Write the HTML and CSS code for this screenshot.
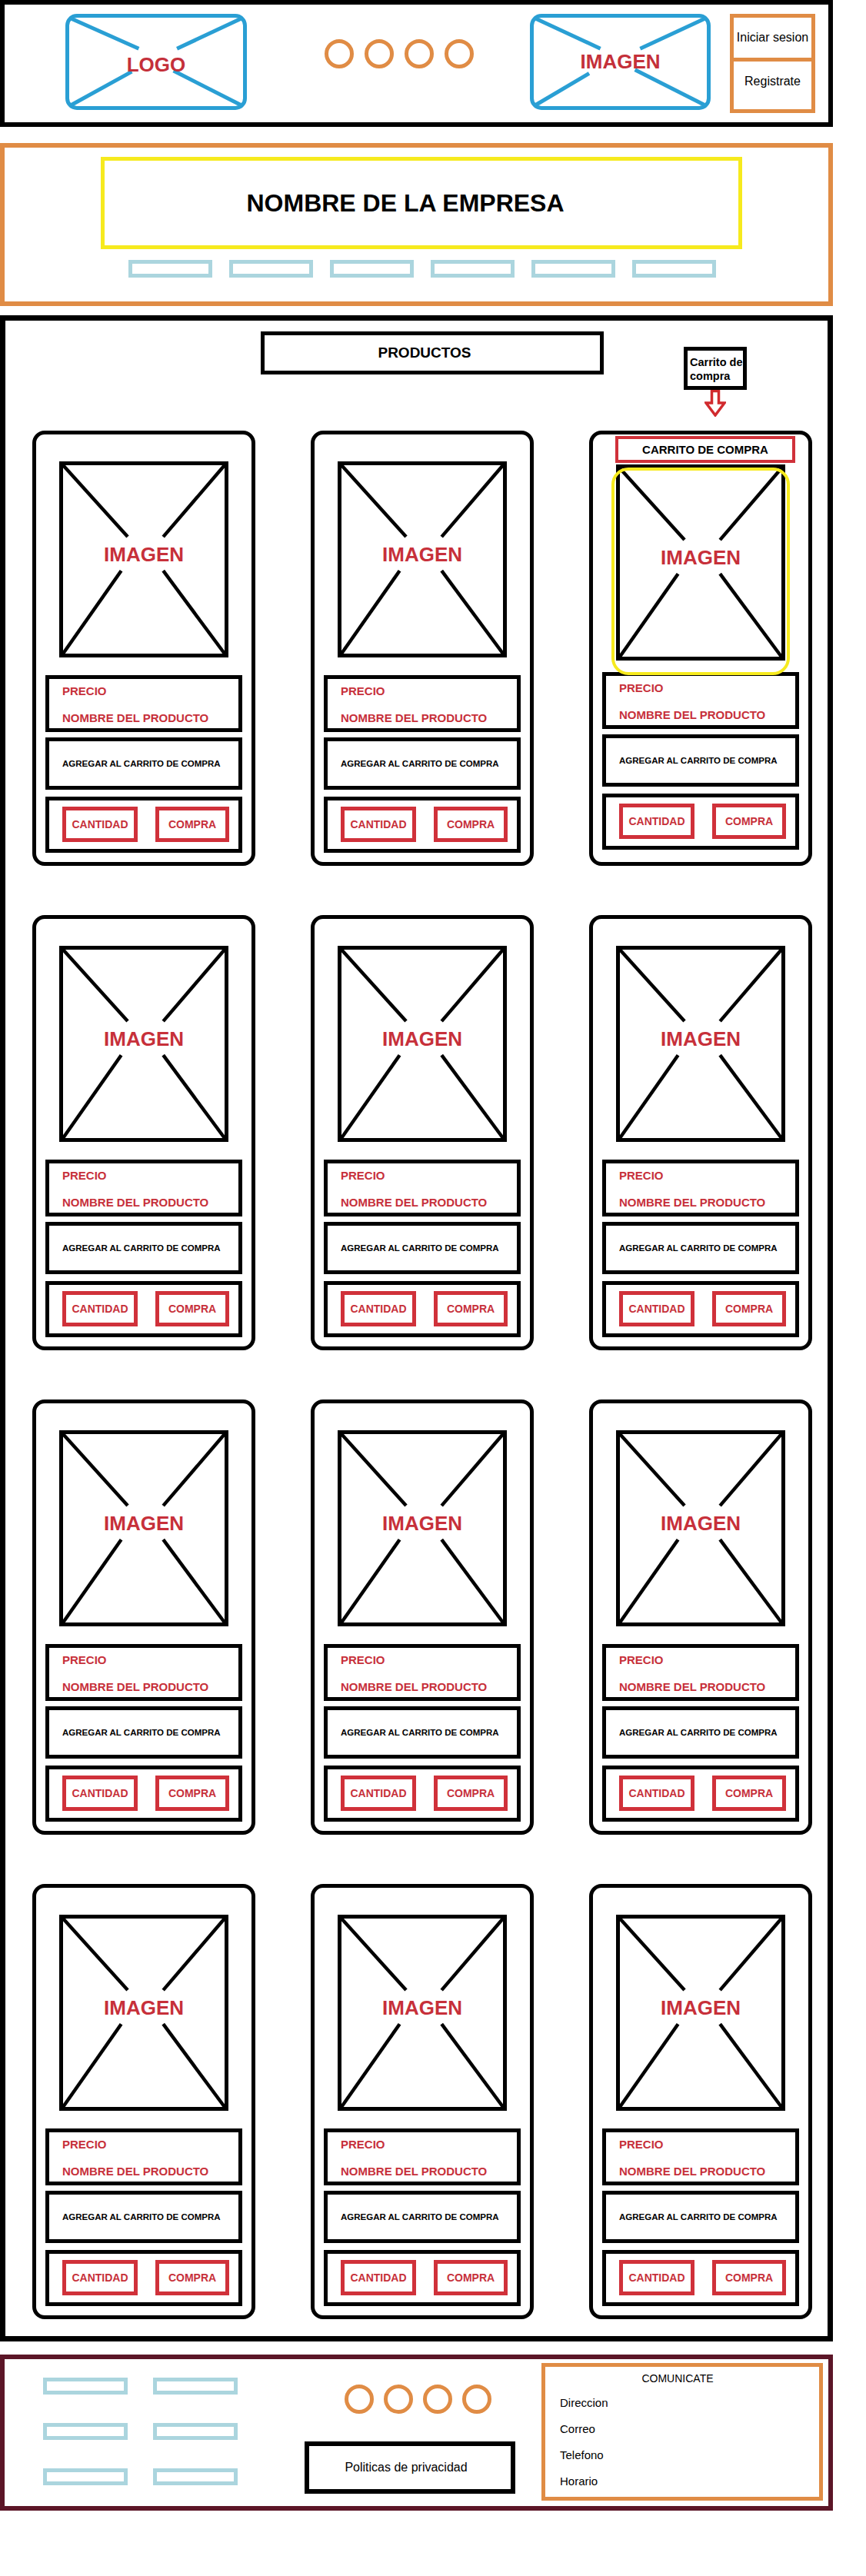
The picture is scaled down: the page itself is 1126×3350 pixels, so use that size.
FILE: index.html
```html
<!DOCTYPE html>
<html lang="es">
<head>
<meta charset="utf-8">
<title>Wireframe tienda</title>
<link rel="stylesheet" href="styles.css">
</head>
<body>
<div class="page">

  <header class="topbar">
    <div class="ph ph-logo">
      <svg class="xmark" viewBox="0 0 100 100" preserveAspectRatio="none"><line x1="0" y1="0" x2="40" y2="35"/><line x1="100" y1="0" x2="62" y2="35"/><line x1="0" y1="100" x2="36" y2="61"/><line x1="100" y1="100" x2="60" y2="60"/></svg>
      <span class="ph-label">LOGO</span>
    </div>
    <div class="dots dots-top"><span class="dot"></span><span class="dot"></span><span class="dot"></span><span class="dot"></span></div>
    <div class="ph ph-image">
      <svg class="xmark" viewBox="0 0 100 100" preserveAspectRatio="none"><line x1="0" y1="0" x2="38.5" y2="35"/><line x1="100" y1="0" x2="61.5" y2="35"/><line x1="0" y1="100" x2="32" y2="63"/><line x1="100" y1="100" x2="58.5" y2="59"/></svg>
      <span class="ph-label">IMAGEN</span>
    </div>
    <div class="auth">
      <div class="auth-item">Iniciar sesion</div>
      <div class="auth-item auth-item-2">Registrate</div>
    </div>
  </header>

  <section class="brand">
    <div class="brand-title"><h1>NOMBRE DE LA EMPRESA</h1></div>
    <nav class="brand-nav"><span class="navbox"></span><span class="navbox"></span><span class="navbox"></span><span class="navbox"></span><span class="navbox"></span><span class="navbox"></span></nav>
  </section>

  <main class="products">
    <div class="products-head">
      <div class="products-title">PRODUCTOS</div>
      <div class="cart-note">
        <div class="cart-note-box">Carrito de<br>compra</div>
        <svg class="cart-arrow" viewBox="0 0 28 35"><polygon points="9.5,1.5 18.5,1.5 18.5,17 26,17 14,33 2,17 9.5,17"/></svg>
      </div>
    </div>

    <div class="grid">
      <article class="card">
        <div class="card-img"><svg class="xmark" viewBox="0 0 100 100" preserveAspectRatio="none"><line x1="0" y1="0" x2="40" y2="38"/><line x1="100" y1="0" x2="62" y2="38"/><line x1="0" y1="100" x2="36" y2="56"/><line x1="100" y1="100" x2="62" y2="56"/></svg><span class="img-label">IMAGEN</span></div>
        <div class="card-info"><span>PRECIO</span><span>NOMBRE DEL PRODUCTO</span></div>
        <div class="card-add">AGREGAR AL CARRITO DE COMPRA</div>
        <div class="card-actions"><span class="btn btn-qty">CANTIDAD</span><span class="btn btn-buy">COMPRA</span></div>
      </article>
      <article class="card">
        <div class="card-img"><svg class="xmark" viewBox="0 0 100 100" preserveAspectRatio="none"><line x1="0" y1="0" x2="40" y2="38"/><line x1="100" y1="0" x2="62" y2="38"/><line x1="0" y1="100" x2="36" y2="56"/><line x1="100" y1="100" x2="62" y2="56"/></svg><span class="img-label">IMAGEN</span></div>
        <div class="card-info"><span>PRECIO</span><span>NOMBRE DEL PRODUCTO</span></div>
        <div class="card-add">AGREGAR AL CARRITO DE COMPRA</div>
        <div class="card-actions"><span class="btn btn-qty">CANTIDAD</span><span class="btn btn-buy">COMPRA</span></div>
      </article>
      <article class="card card-featured">
        <div class="cart-bar">CARRITO DE COMPRA</div>
        <div class="card-img"><svg class="xmark" viewBox="0 0 100 100" preserveAspectRatio="none"><line x1="0" y1="0" x2="40" y2="38"/><line x1="100" y1="0" x2="62" y2="38"/><line x1="0" y1="100" x2="36" y2="56"/><line x1="100" y1="100" x2="62" y2="56"/></svg><span class="img-label">IMAGEN</span><span class="highlight"></span></div>
        <div class="card-info"><span>PRECIO</span><span>NOMBRE DEL PRODUCTO</span></div>
        <div class="card-add">AGREGAR AL CARRITO DE COMPRA</div>
        <div class="card-actions"><span class="btn btn-qty">CANTIDAD</span><span class="btn btn-buy">COMPRA</span></div>
      </article>

      <article class="card">
        <div class="card-img"><svg class="xmark" viewBox="0 0 100 100" preserveAspectRatio="none"><line x1="0" y1="0" x2="40" y2="38"/><line x1="100" y1="0" x2="62" y2="38"/><line x1="0" y1="100" x2="36" y2="56"/><line x1="100" y1="100" x2="62" y2="56"/></svg><span class="img-label">IMAGEN</span></div>
        <div class="card-info"><span>PRECIO</span><span>NOMBRE DEL PRODUCTO</span></div>
        <div class="card-add">AGREGAR AL CARRITO DE COMPRA</div>
        <div class="card-actions"><span class="btn btn-qty">CANTIDAD</span><span class="btn btn-buy">COMPRA</span></div>
      </article>
      <article class="card">
        <div class="card-img"><svg class="xmark" viewBox="0 0 100 100" preserveAspectRatio="none"><line x1="0" y1="0" x2="40" y2="38"/><line x1="100" y1="0" x2="62" y2="38"/><line x1="0" y1="100" x2="36" y2="56"/><line x1="100" y1="100" x2="62" y2="56"/></svg><span class="img-label">IMAGEN</span></div>
        <div class="card-info"><span>PRECIO</span><span>NOMBRE DEL PRODUCTO</span></div>
        <div class="card-add">AGREGAR AL CARRITO DE COMPRA</div>
        <div class="card-actions"><span class="btn btn-qty">CANTIDAD</span><span class="btn btn-buy">COMPRA</span></div>
      </article>
      <article class="card">
        <div class="card-img"><svg class="xmark" viewBox="0 0 100 100" preserveAspectRatio="none"><line x1="0" y1="0" x2="40" y2="38"/><line x1="100" y1="0" x2="62" y2="38"/><line x1="0" y1="100" x2="36" y2="56"/><line x1="100" y1="100" x2="62" y2="56"/></svg><span class="img-label">IMAGEN</span></div>
        <div class="card-info"><span>PRECIO</span><span>NOMBRE DEL PRODUCTO</span></div>
        <div class="card-add">AGREGAR AL CARRITO DE COMPRA</div>
        <div class="card-actions"><span class="btn btn-qty">CANTIDAD</span><span class="btn btn-buy">COMPRA</span></div>
      </article>

      <article class="card">
        <div class="card-img"><svg class="xmark" viewBox="0 0 100 100" preserveAspectRatio="none"><line x1="0" y1="0" x2="40" y2="38"/><line x1="100" y1="0" x2="62" y2="38"/><line x1="0" y1="100" x2="36" y2="56"/><line x1="100" y1="100" x2="62" y2="56"/></svg><span class="img-label">IMAGEN</span></div>
        <div class="card-info"><span>PRECIO</span><span>NOMBRE DEL PRODUCTO</span></div>
        <div class="card-add">AGREGAR AL CARRITO DE COMPRA</div>
        <div class="card-actions"><span class="btn btn-qty">CANTIDAD</span><span class="btn btn-buy">COMPRA</span></div>
      </article>
      <article class="card">
        <div class="card-img"><svg class="xmark" viewBox="0 0 100 100" preserveAspectRatio="none"><line x1="0" y1="0" x2="40" y2="38"/><line x1="100" y1="0" x2="62" y2="38"/><line x1="0" y1="100" x2="36" y2="56"/><line x1="100" y1="100" x2="62" y2="56"/></svg><span class="img-label">IMAGEN</span></div>
        <div class="card-info"><span>PRECIO</span><span>NOMBRE DEL PRODUCTO</span></div>
        <div class="card-add">AGREGAR AL CARRITO DE COMPRA</div>
        <div class="card-actions"><span class="btn btn-qty">CANTIDAD</span><span class="btn btn-buy">COMPRA</span></div>
      </article>
      <article class="card">
        <div class="card-img"><svg class="xmark" viewBox="0 0 100 100" preserveAspectRatio="none"><line x1="0" y1="0" x2="40" y2="38"/><line x1="100" y1="0" x2="62" y2="38"/><line x1="0" y1="100" x2="36" y2="56"/><line x1="100" y1="100" x2="62" y2="56"/></svg><span class="img-label">IMAGEN</span></div>
        <div class="card-info"><span>PRECIO</span><span>NOMBRE DEL PRODUCTO</span></div>
        <div class="card-add">AGREGAR AL CARRITO DE COMPRA</div>
        <div class="card-actions"><span class="btn btn-qty">CANTIDAD</span><span class="btn btn-buy">COMPRA</span></div>
      </article>

      <article class="card">
        <div class="card-img"><svg class="xmark" viewBox="0 0 100 100" preserveAspectRatio="none"><line x1="0" y1="0" x2="40" y2="38"/><line x1="100" y1="0" x2="62" y2="38"/><line x1="0" y1="100" x2="36" y2="56"/><line x1="100" y1="100" x2="62" y2="56"/></svg><span class="img-label">IMAGEN</span></div>
        <div class="card-info"><span>PRECIO</span><span>NOMBRE DEL PRODUCTO</span></div>
        <div class="card-add">AGREGAR AL CARRITO DE COMPRA</div>
        <div class="card-actions"><span class="btn btn-qty">CANTIDAD</span><span class="btn btn-buy">COMPRA</span></div>
      </article>
      <article class="card">
        <div class="card-img"><svg class="xmark" viewBox="0 0 100 100" preserveAspectRatio="none"><line x1="0" y1="0" x2="40" y2="38"/><line x1="100" y1="0" x2="62" y2="38"/><line x1="0" y1="100" x2="36" y2="56"/><line x1="100" y1="100" x2="62" y2="56"/></svg><span class="img-label">IMAGEN</span></div>
        <div class="card-info"><span>PRECIO</span><span>NOMBRE DEL PRODUCTO</span></div>
        <div class="card-add">AGREGAR AL CARRITO DE COMPRA</div>
        <div class="card-actions"><span class="btn btn-qty">CANTIDAD</span><span class="btn btn-buy">COMPRA</span></div>
      </article>
      <article class="card">
        <div class="card-img"><svg class="xmark" viewBox="0 0 100 100" preserveAspectRatio="none"><line x1="0" y1="0" x2="40" y2="38"/><line x1="100" y1="0" x2="62" y2="38"/><line x1="0" y1="100" x2="36" y2="56"/><line x1="100" y1="100" x2="62" y2="56"/></svg><span class="img-label">IMAGEN</span></div>
        <div class="card-info"><span>PRECIO</span><span>NOMBRE DEL PRODUCTO</span></div>
        <div class="card-add">AGREGAR AL CARRITO DE COMPRA</div>
        <div class="card-actions"><span class="btn btn-qty">CANTIDAD</span><span class="btn btn-buy">COMPRA</span></div>
      </article>
    </div>
  </main>

  <footer class="footer">
    <div class="footer-links">
      <span class="navbox"></span><span class="navbox"></span>
      <span class="navbox"></span><span class="navbox"></span>
      <span class="navbox"></span><span class="navbox"></span>
    </div>
    <div class="footer-mid">
      <div class="dots dots-foot"><span class="dot"></span><span class="dot"></span><span class="dot"></span><span class="dot"></span></div>
      <div class="privacy">Politicas de privacidad</div>
    </div>
    <div class="contact">
      <div class="contact-title">COMUNICATE</div>
      <ul class="contact-list">
        <li>Direccion</li>
        <li>Correo</li>
        <li>Telefono</li>
        <li>Horario</li>
      </ul>
    </div>
  </footer>

</div>
</body>
</html>
```

FILE: styles.css
```css
html, body {
  margin: 0;
  padding: 0;
  background: #ffffff;
}

body {
  font-family: "Liberation Sans", Arial, sans-serif;
  color: #000;
}

.page {
  width: 1083px;
  min-height: 3350px;
}

/* ---------- top bar ---------- */
.topbar {
  box-sizing: border-box;
  height: 165px;
  border: 6px solid #000;
  display: flex;
  align-items: flex-start;
}

.ph {
  position: relative;
  box-sizing: border-box;
  border: 5px solid #2a9fd4;
  border-radius: 15px;
  height: 125px;
  margin-top: 12px;
  display: flex;
  align-items: center;
  justify-content: center;
}

.ph-logo {
  width: 236px;
  margin-left: 79px;
}

.ph-image {
  width: 235px;
  margin-left: 73px;
}

.xmark {
  position: absolute;
  left: 0;
  top: 0;
  width: 100%;
  height: 100%;
  overflow: visible;
}

.xmark line {
  stroke: #000;
  stroke-width: 4.5;
  vector-effect: non-scaling-stroke;
}

.ph .xmark line {
  stroke: #2a9fd4;
  stroke-width: 5;
}

.ph-label {
  position: relative;
  font-weight: bold;
  font-size: 26px;
  color: #c4303a;
}

.ph-logo .ph-label {
  margin-top: 8px;
}

.dots {
  display: flex;
  gap: 14px;
}

.dots-top {
  margin-left: 101px;
  margin-top: 45px;
}

.dot {
  box-sizing: border-box;
  width: 38px;
  height: 38px;
  border: 5px solid #e08c45;
  border-radius: 50%;
}

.auth {
  box-sizing: border-box;
  width: 111px;
  height: 129px;
  margin-left: 25px;
  margin-top: 12px;
  border: 5px solid #e08c45;
  display: flex;
  flex-direction: column;
}

.auth-item {
  flex: 1;
  display: flex;
  align-items: center;
  justify-content: center;
  font-size: 16px;
}

.auth-item-2 {
  border-top: 5px solid #e08c45;
  padding-bottom: 10px;
}

/* ---------- brand ---------- */
.brand {
  box-sizing: border-box;
  height: 212px;
  margin-top: 21px;
  border: 6px solid #e08c45;
  padding: 12px 0 0 125px;
}

.brand-title {
  box-sizing: border-box;
  width: 834px;
  height: 120px;
  border: 5px solid #f6ea1e;
  display: flex;
  align-items: center;
  justify-content: center;
  padding-right: 42px;
}

.brand-title h1 {
  margin: 0;
  font-size: 32px;
  font-weight: bold;
}

.brand-nav {
  display: flex;
  gap: 22px;
  margin: 14px 0 0 36px;
}

.navbox {
  box-sizing: border-box;
  width: 109px;
  height: 23px;
  border: 5px solid #abd5de;
}

/* ---------- products ---------- */
.products {
  display: block;
  box-sizing: border-box;
  margin-top: 12px;
  border: 7px solid #000;
  padding: 0 20px 22px 35px;
}

.products-head {
  display: flex;
  align-items: flex-start;
  padding-left: 297px;
}

.products-title {
  box-sizing: border-box;
  width: 446px;
  height: 56px;
  margin-top: 14px;
  border: 5px solid #000;
  display: flex;
  align-items: center;
  justify-content: center;
  padding-right: 20px;
  font-weight: bold;
  font-size: 19px;
}

.cart-note {
  margin-left: 104px;
  margin-top: 34px;
  display: flex;
  flex-direction: column;
  align-items: center;
}

.cart-note-box {
  box-sizing: border-box;
  width: 82px;
  height: 56px;
  border: 5px solid #000;
  padding: 6px 0 0 3px;
  font-weight: bold;
  font-size: 14.5px;
  line-height: 18px;
  white-space: nowrap;
}

.cart-arrow {
  display: block;
  width: 28px;
  height: 35px;
}

.cart-arrow polygon {
  fill: #fff;
  stroke: #d12a2e;
  stroke-width: 3.5;
  stroke-linejoin: miter;
}

.grid {
  display: grid;
  grid-template-columns: repeat(3, 290px);
  column-gap: 72px;
  row-gap: 64px;
  margin-top: 18px;
}

.card {
  box-sizing: border-box;
  height: 566px;
  border: 5px solid #000;
  border-radius: 16px;
  padding: 35px 12px 12px;
  display: flex;
  flex-direction: column;
}

.card-img {
  position: relative;
  box-sizing: border-box;
  height: 255px;
  margin: 0 18px 23px;
  border: 5px solid #000;
  display: flex;
  align-items: center;
  justify-content: center;
}

.img-label {
  position: relative;
  font-weight: bold;
  font-size: 26px;
  color: #c7303a;
  margin-top: -12px;
}

.card-info {
  box-sizing: border-box;
  height: 74px;
  border: 5px solid #000;
  padding: 7px 0 0 17px;
  display: flex;
  flex-direction: column;
  gap: 17px;
  font-weight: bold;
  font-size: 15px;
  line-height: 18px;
  color: #c7303a;
}

.card-add {
  box-sizing: border-box;
  height: 68px;
  margin-top: 7px;
  border: 5px solid #000;
  padding-left: 17px;
  display: flex;
  align-items: center;
  font-weight: bold;
  font-size: 11.5px;
}

.card-actions {
  box-sizing: border-box;
  height: 73px;
  margin-top: 9px;
  border: 5px solid #000;
  padding: 0 0 2px 17px;
  display: flex;
  align-items: center;
  gap: 23px;
}

.btn {
  box-sizing: border-box;
  height: 46px;
  border: 5px solid #d0313a;
  display: flex;
  align-items: center;
  justify-content: center;
  font-weight: bold;
  font-size: 14px;
  color: #c7303a;
}

.btn-qty {
  width: 98px;
}

.btn-buy {
  width: 96px;
}

.card-featured {
  padding-top: 2px;
}

.card-featured .card-img {
  margin-bottom: 15px;
}

.cart-bar {
  box-sizing: border-box;
  height: 35px;
  margin: 0 5px 2px 17px;
  border: 4px solid #d0313a;
  display: flex;
  align-items: center;
  justify-content: center;
  font-weight: bold;
  font-size: 15px;
}

.highlight {
  position: absolute;
  left: -11px;
  right: -11px;
  top: -1px;
  bottom: -24px;
  border: 4px solid #f6ea1e;
  border-radius: 22px;
  z-index: 2;
}

/* ---------- footer ---------- */
.footer {
  box-sizing: border-box;
  height: 203px;
  margin-top: 17px;
  border: 6px solid #5c1627;
  display: flex;
  align-items: flex-start;
}

.footer-links {
  display: grid;
  grid-template-columns: 110px 110px;
  column-gap: 33px;
  row-gap: 37px;
  margin: 24px 0 0 50px;
}

.footer-links .navbox {
  width: 110px;
  height: 22px;
}

.footer-mid {
  width: 274px;
  margin: 33px 0 0 87px;
}

.dots-foot {
  margin-left: 52px;
  gap: 13px;
}

.privacy {
  box-sizing: border-box;
  height: 68px;
  margin-top: 36px;
  border: 6px solid #000;
  display: flex;
  align-items: center;
  justify-content: center;
  padding-right: 10px;
  font-size: 16px;
}

.contact {
  box-sizing: border-box;
  width: 366px;
  height: 179px;
  margin: 5px 0 0 34px;
  border: 5px solid #e08c45;
  padding: 5px 0 0 19px;
}

.contact-title {
  text-align: center;
  padding-right: 31px;
  font-size: 14px;
  line-height: 20px;
}

.contact-list {
  list-style: none;
  margin: 12px 0 0;
  padding: 0;
  display: flex;
  flex-direction: column;
  gap: 14px;
}

.contact-list li {
  font-size: 15px;
  line-height: 20px;
}
```
